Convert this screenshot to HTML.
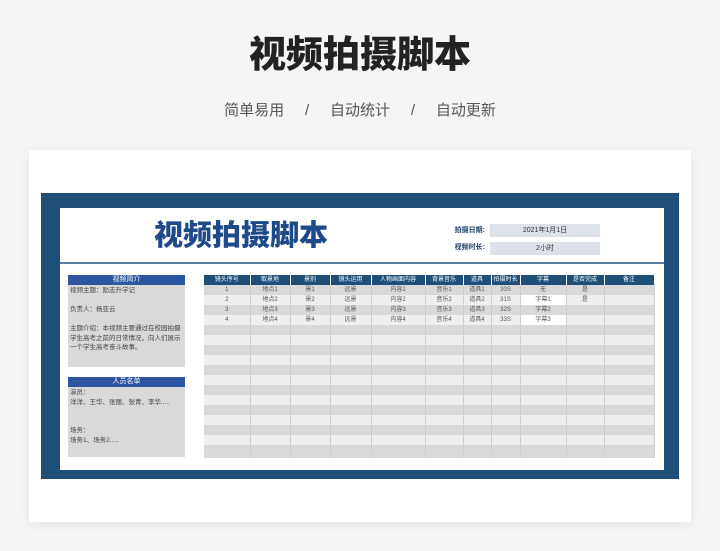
<!DOCTYPE html>
<html><head><meta charset="utf-8"><style>
*{margin:0;padding:0;box-sizing:border-box}
body{width:720px;height:551px;background:#f4f5f7;font-family:"Liberation Sans","Noto Sans CJK SC",sans-serif;position:relative;overflow:hidden}
.a{position:absolute}
.t{left:0;width:720px;text-align:center;top:32px;font-size:37px;font-weight:900;color:#222;line-height:46px}
.s{left:0;width:720px;text-align:center;top:101px;font-size:15px;color:#555;line-height:20px}
.card{left:29px;top:150px;width:662px;height:372px;background:#fff;box-shadow:0 2px 10px rgba(0,0,0,.08)}
.frame{left:41px;top:193px;width:638px;height:286px;background:#1f4e79}
.in{left:60px;top:208px;width:604px;height:262px;background:#fff}
.div{left:60px;top:262px;width:604px;height:2px;background:#5a7fa3}
.h{left:76px;top:217px;width:330px;text-align:center;font-size:29px;font-weight:900;color:#1f4a8a;line-height:38px}
.lab{font-size:7px;font-weight:bold;color:#1f3f6a;text-align:right;width:60px;line-height:12px}
.box{background:#dde2ea;font-size:7px;color:#333;text-align:center;line-height:13px;width:110px;height:13px}
.ph{background:#2d55a0;color:#fff;font-size:7px;text-align:center;line-height:10px;height:10px;left:68px;width:117px}
.pb{background:#d9d9d9;left:68px;width:117px;font-size:6.5px;color:#444;line-height:9.5px;padding:1px 2px}
table{position:absolute;left:204px;top:275px;width:450px;border-collapse:collapse;font-size:6px;color:#555;table-layout:fixed}
td,th{height:10px;border-right:1px solid #cfcfcf;text-align:center;padding:0;line-height:10px;white-space:nowrap;overflow:hidden}
th{background:#1f4e79;color:#fff;font-weight:normal;border-right:1px solid #fff}
tr.g td{background:#d9d9d9}tr.l td{background:#efefef}
td.w{background:#fff!important}
</style></head><body>
<div class="a t">视频拍摄脚本</div>
<div class="a s">简单易用&nbsp;&nbsp;&nbsp;&nbsp;&nbsp;/&nbsp;&nbsp;&nbsp;&nbsp;&nbsp;自动统计&nbsp;&nbsp;&nbsp;&nbsp;&nbsp;/&nbsp;&nbsp;&nbsp;&nbsp;&nbsp;自动更新</div>
<div class="a card"></div>
<div class="a frame"></div>
<div class="a in"></div>
<div class="a div"></div>
<div class="a h">视频拍摄脚本</div>
<div class="a lab" style="left:425px;top:225px">拍摄日期:</div>
<div class="a lab" style="left:425px;top:242px">视频时长:</div>
<div class="a box" style="left:490px;top:224px">2021年1月1日</div>
<div class="a box" style="left:490px;top:242px">2小时</div>
<div class="a ph" style="top:275px">视频简介</div>
<div class="a pb" style="top:285px;height:82px">视频主题：励志升学记<br><br>负责人：杨亚云<br><br>主题介绍：本视频主要通过在校园拍摄学生高考之前的日常情况，向人们展示一个学生高考奋斗故事。</div>
<div class="a ph" style="top:377px">人员名单</div>
<div class="a pb" style="top:387px;height:70px">演员：<br>洋洋、王华、张丽、张青、李华.....<br><br><br>场务：<br>场务1、场务2.....</div>
<table>
<colgroup><col style="width:46px"><col style="width:40px"><col style="width:40px"><col style="width:41px"><col style="width:54px"><col style="width:38px"><col style="width:28px"><col style="width:29px"><col style="width:46px"><col style="width:38px"><col style="width:50px"></colgroup>
<tr><th>镜头序号</th><th>取景地</th><th>景别</th><th>镜头运用</th><th>人物画面内容</th><th>背景音乐</th><th>道具</th><th>拍摄时长</th><th>字幕</th><th>是否完成</th><th>备注</th></tr>
<tr class="g"><td>1</td><td>地点1</td><td>景1</td><td>远景</td><td>内容1</td><td>音乐1</td><td>道具1</td><td>30S</td><td>无</td><td>是</td><td></td></tr>
<tr class="l"><td>2</td><td>地点2</td><td>景2</td><td>远景</td><td>内容2</td><td>音乐2</td><td>道具2</td><td>31S</td><td class="w">字幕1</td><td>是</td><td></td></tr>
<tr class="g"><td>3</td><td>地点3</td><td>景3</td><td>远景</td><td>内容3</td><td>音乐3</td><td>道具3</td><td>32S</td><td>字幕2</td><td></td><td></td></tr>
<tr class="l"><td>4</td><td>地点4</td><td>景4</td><td>远景</td><td>内容4</td><td>音乐4</td><td>道具4</td><td>33S</td><td class="w">字幕3</td><td></td><td></td></tr>
<tr class="g"><td></td><td></td><td></td><td></td><td></td><td></td><td></td><td></td><td></td><td></td><td></td></tr>
<tr class="l"><td></td><td></td><td></td><td></td><td></td><td></td><td></td><td></td><td></td><td></td><td></td></tr>
<tr class="g"><td></td><td></td><td></td><td></td><td></td><td></td><td></td><td></td><td></td><td></td><td></td></tr>
<tr class="l"><td></td><td></td><td></td><td></td><td></td><td></td><td></td><td></td><td></td><td></td><td></td></tr>
<tr class="g"><td></td><td></td><td></td><td></td><td></td><td></td><td></td><td></td><td></td><td></td><td></td></tr>
<tr class="l"><td></td><td></td><td></td><td></td><td></td><td></td><td></td><td></td><td></td><td></td><td></td></tr>
<tr class="g"><td></td><td></td><td></td><td></td><td></td><td></td><td></td><td></td><td></td><td></td><td></td></tr>
<tr class="l"><td></td><td></td><td></td><td></td><td></td><td></td><td></td><td></td><td></td><td></td><td></td></tr>
<tr class="g"><td></td><td></td><td></td><td></td><td></td><td></td><td></td><td></td><td></td><td></td><td></td></tr>
<tr class="l"><td></td><td></td><td></td><td></td><td></td><td></td><td></td><td></td><td></td><td></td><td></td></tr>
<tr class="g"><td></td><td></td><td></td><td></td><td></td><td></td><td></td><td></td><td></td><td></td><td></td></tr>
<tr class="l"><td></td><td></td><td></td><td></td><td></td><td></td><td></td><td></td><td></td><td></td><td></td></tr>
<tr class="g"><td style="height:13px"></td><td></td><td></td><td></td><td></td><td></td><td></td><td></td><td></td><td></td><td></td></tr>
</table>
</body></html>
